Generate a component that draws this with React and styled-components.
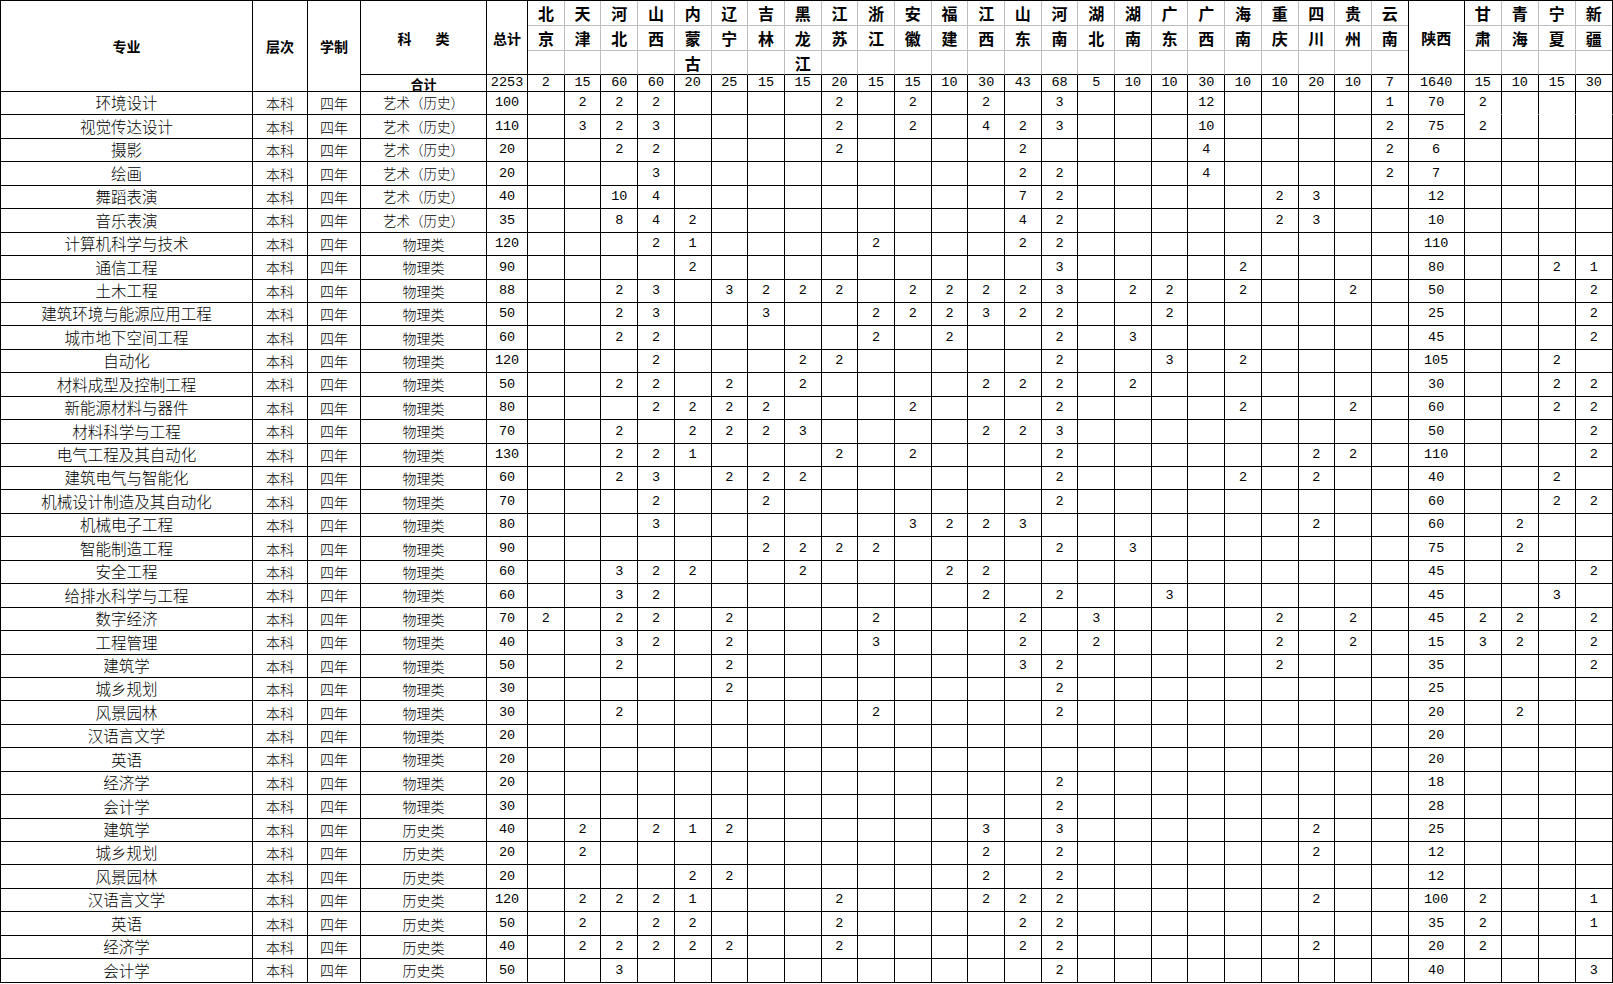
import React from 'react';
import styled, { createGlobalStyle } from 'styled-components';

const CJK = '"Noto Sans CJK SC", "Liberation Sans", sans-serif';
const NUM = '"Liberation Mono", "DejaVu Sans Mono", monospace';
const GRID = '#bdbdbd';

const GlobalStyle = createGlobalStyle`
  html, body {
    margin: 0;
    padding: 0;
    background: #fff;
  }
  body {
    font-family: ${CJK};
    color: #000;
  }
`;

const PROVINCES = [
  '北京', '天津', '河北', '山西', '内蒙古', '辽宁', '吉林', '黑龙江', '江苏', '浙江', '安徽', '福建',
  '江西', '山东', '河南', '湖北', '湖南', '广东', '广西', '海南', '重庆', '四川', '贵州', '云南',
];
const WEST = ['甘肃', '青海', '宁夏', '新疆'];

// 北京 ... 云南, 陕西, 甘肃 青海 宁夏 新疆
const TOTALS = '2 15 60 60 20 25 15 15 20 15 15 10 30 43 68 5 10 10 30 10 10 20 10 7 1640 15 10 15 30';

const ROWS = [
  ['环境设计', '艺术（历史）', 100, '. 2 2 2 . . . . 2 . 2 . 2 . 3 . . . 12 . . . . 1 70 2 . . .'],
  ['视觉传达设计', '艺术（历史）', 110, '. 3 2 3 . . . . 2 . 2 . 4 2 3 . . . 10 . . . . 2 75 2 . . .'],
  ['摄影', '艺术（历史）', 20, '. . 2 2 . . . . 2 . . . . 2 . . . . 4 . . . . 2 6 . . . .'],
  ['绘画', '艺术（历史）', 20, '. . . 3 . . . . . . . . . 2 2 . . . 4 . . . . 2 7 . . . .'],
  ['舞蹈表演', '艺术（历史）', 40, '. . 10 4 . . . . . . . . . 7 2 . . . . . 2 3 . . 12 . . . .'],
  ['音乐表演', '艺术（历史）', 35, '. . 8 4 2 . . . . . . . . 4 2 . . . . . 2 3 . . 10 . . . .'],
  ['计算机科学与技术', '物理类', 120, '. . . 2 1 . . . . 2 . . . 2 2 . . . . . . . . . 110 . . . .'],
  ['通信工程', '物理类', 90, '. . . . 2 . . . . . . . . . 3 . . . . 2 . . . . 80 . . 2 1'],
  ['土木工程', '物理类', 88, '. . 2 3 . 3 2 2 2 . 2 2 2 2 3 . 2 2 . 2 . . 2 . 50 . . . 2'],
  ['建筑环境与能源应用工程', '物理类', 50, '. . 2 3 . . 3 . . 2 2 2 3 2 2 . . 2 . . . . . . 25 . . . 2'],
  ['城市地下空间工程', '物理类', 60, '. . 2 2 . . . . . 2 . 2 . . 2 . 3 . . . . . . . 45 . . . 2'],
  ['自动化', '物理类', 120, '. . . 2 . . . 2 2 . . . . . 2 . . 3 . 2 . . . . 105 . . 2 .'],
  ['材料成型及控制工程', '物理类', 50, '. . 2 2 . 2 . 2 . . . . 2 2 2 . 2 . . . . . . . 30 . . 2 2'],
  ['新能源材料与器件', '物理类', 80, '. . . 2 2 2 2 . . . 2 . . . 2 . . . . 2 . . 2 . 60 . . 2 2'],
  ['材料科学与工程', '物理类', 70, '. . 2 . 2 2 2 3 . . . . 2 2 3 . . . . . . . . . 50 . . . 2'],
  ['电气工程及其自动化', '物理类', 130, '. . 2 2 1 . . . 2 . 2 . . . 2 . . . . . . 2 2 . 110 . . . 2'],
  ['建筑电气与智能化', '物理类', 60, '. . 2 3 . 2 2 2 . . . . . . 2 . . . . 2 . 2 . . 40 . . 2 .'],
  ['机械设计制造及其自动化', '物理类', 70, '. . . 2 . . 2 . . . . . . . 2 . . . . . . . . . 60 . . 2 2'],
  ['机械电子工程', '物理类', 80, '. . . 3 . . . . . . 3 2 2 3 . . . . . . . 2 . . 60 . 2 . .'],
  ['智能制造工程', '物理类', 90, '. . . . . . 2 2 2 2 . . . . 2 . 3 . . . . . . . 75 . 2 . .'],
  ['安全工程', '物理类', 60, '. . 3 2 2 . . 2 . . . 2 2 . . . . . . . . . . . 45 . . . 2'],
  ['给排水科学与工程', '物理类', 60, '. . 3 2 . . . . . . . . 2 . 2 . . 3 . . . . . . 45 . . 3 .'],
  ['数字经济', '物理类', 70, '2 . 2 2 . 2 . . . 2 . . . 2 . 3 . . . . 2 . 2 . 45 2 2 . 2'],
  ['工程管理', '物理类', 40, '. . 3 2 . 2 . . . 3 . . . 2 . 2 . . . . 2 . 2 . 15 3 2 . 2'],
  ['建筑学', '物理类', 50, '. . 2 . . 2 . . . . . . . 3 2 . . . . . 2 . . . 35 . . . 2'],
  ['城乡规划', '物理类', 30, '. . . . . 2 . . . . . . . . 2 . . . . . . . . . 25 . . . .'],
  ['风景园林', '物理类', 30, '. . 2 . . . . . . 2 . . . . 2 . . . . . . . . . 20 . 2 . .'],
  ['汉语言文学', '物理类', 20, '. . . . . . . . . . . . . . . . . . . . . . . . 20 . . . .'],
  ['英语', '物理类', 20, '. . . . . . . . . . . . . . . . . . . . . . . . 20 . . . .'],
  ['经济学', '物理类', 20, '. . . . . . . . . . . . . . 2 . . . . . . . . . 18 . . . .'],
  ['会计学', '物理类', 30, '. . . . . . . . . . . . . . 2 . . . . . . . . . 28 . . . .'],
  ['建筑学', '历史类', 40, '. 2 . 2 1 2 . . . . . . 3 . 3 . . . . . . 2 . . 25 . . . .'],
  ['城乡规划', '历史类', 20, '. 2 . . . . . . . . . . 2 . 2 . . . . . . 2 . . 12 . . . .'],
  ['风景园林', '历史类', 20, '. . . . 2 2 . . . . . . 2 . 2 . . . . . . . . . 12 . . . .'],
  ['汉语言文学', '历史类', 120, '. 2 2 2 1 . . . 2 . . . 2 2 2 . . . . . . 2 . . 100 2 . . 1'],
  ['英语', '历史类', 50, '. 2 . 2 2 . . . 2 . . . . 2 2 . . . . . . . . . 35 2 . . 1'],
  ['经济学', '历史类', 40, '. 2 2 2 2 2 . . 2 . . . . 2 2 . . . . . . 2 . . 20 2 . . .'],
  ['会计学', '历史类', 50, '. . 3 . . . . . . . . . . . 2 . . . . . . . . . 40 . . . 3'],
];

const WIDTHS = [252, 55, 53, 126, 41, ...Array(24).fill(36.7), 56.2, 37, 37, 37, 37];

const Sheet = styled.table`
  width: 1613px;
  table-layout: fixed;
  border-collapse: separate;
  border-spacing: 0;
  border-top: 1px solid #000;
  border-left: 1px solid #000;
`;

const HeadRow = styled.tr`
  height: ${(p) => p.$h}px;
`;

const BodyRow = styled.tr`
  height: 23.45px;
`;

const Th = styled.th`
  padding: 0;
  border-right: 1px solid #000;
  border-bottom: 1px solid #000;
  font-family: ${CJK};
  font-size: ${(p) => p.$size || 14}px;
  font-weight: 700;
  line-height: 1;
  text-align: center;
  vertical-align: middle;
  white-space: nowrap;
`;

const SpacedLabel = styled.span`
  letter-spacing: 24px;
  padding-left: 24px;
`;

const ProvTh = styled(Th)`
  vertical-align: top;
  border-right-color: ${(p) => (p.$edge ? '#000' : GRID)};
`;

const CharBox = styled.div`
  height: ${(p) => (p.$last ? 23 : 24)}px;
  border-bottom: ${(p) => (p.$last ? 'none' : `1px solid ${GRID}`)};
  display: flex;
  align-items: center;
  justify-content: center;
  font-size: 16px;
  font-weight: 700;
`;

const TotalTh = styled(Th)`
  font-family: ${NUM};
  font-weight: 400;
  font-size: 13.5px;
`;

const Td = styled.td`
  padding: 0;
  border-right: 1px solid #000;
  border-bottom: ${(p) => (p.$open ? '1px solid transparent' : '1px solid #000')};
  text-align: center;
  vertical-align: middle;
  line-height: 1;
  white-space: nowrap;
  overflow: hidden;
  font-family: ${(p) => (p.$num ? NUM : CJK)};
  font-weight: ${(p) => (p.$num ? 400 : 300)};
  font-size: ${(p) => p.$size || 13.5}px;
`;

const ProvinceHead = ({ name, edge }) => {
  const chars = name.split('');
  while (chars.length < 3) chars.push('');
  return (
    <ProvTh $edge={edge}>
      {chars.map((c, i) => (
        <CharBox key={i} $last={i === 2}>{c}</CharBox>
      ))}
    </ProvTh>
  );
};

const DataRow = ({ row, first }) => {
  const [major, kind, total, cells] = row;
  const values = cells.split(' ').map((v) => (v === '.' ? '' : v));
  return (
    <BodyRow>
      <Td $size={15.5}>{major}</Td>
      <Td $size={14}>本科</Td>
      <Td $size={14}>四年</Td>
      <Td $size={kind.length > 3 ? 13.5 : 14}>{kind}</Td>
      <Td $num>{total}</Td>
      {values.map((v, i) => (
        // the west block (甘肃 to 新疆) has no rule under the first row
        <Td key={i} $num $open={first && i > 24}>{v}</Td>
      ))}
    </BodyRow>
  );
};

export default function App() {
  const totals = TOTALS.split(' ');
  return (
    <>
      <GlobalStyle />
      <Sheet>
        <colgroup>
          {WIDTHS.map((w, i) => (
            <col key={i} style={{ width: w }} />
          ))}
        </colgroup>
        <thead>
          <HeadRow $h={74}>
            <Th rowSpan={2}>专业</Th>
            <Th rowSpan={2}>层次</Th>
            <Th rowSpan={2}>学制</Th>
            <Th><SpacedLabel>科类</SpacedLabel></Th>
            <Th>总计</Th>
            {PROVINCES.map((p, i) => (
              <ProvinceHead key={p} name={p} edge={i === PROVINCES.length - 1} />
            ))}
            <Th $size={15}>陕西</Th>
            {WEST.map((p, i) => (
              <ProvinceHead key={p} name={p} edge={i === WEST.length - 1} />
            ))}
          </HeadRow>
          <HeadRow $h={17}>
            <Th $size={13}>合计</Th>
            <TotalTh>2253</TotalTh>
            {totals.map((t, i) => (
              <TotalTh key={i}>{t}</TotalTh>
            ))}
          </HeadRow>
        </thead>
        <tbody>
          {ROWS.map((r, i) => (
            <DataRow key={i} row={r} first={i === 0} />
          ))}
        </tbody>
      </Sheet>
    </>
  );
}
